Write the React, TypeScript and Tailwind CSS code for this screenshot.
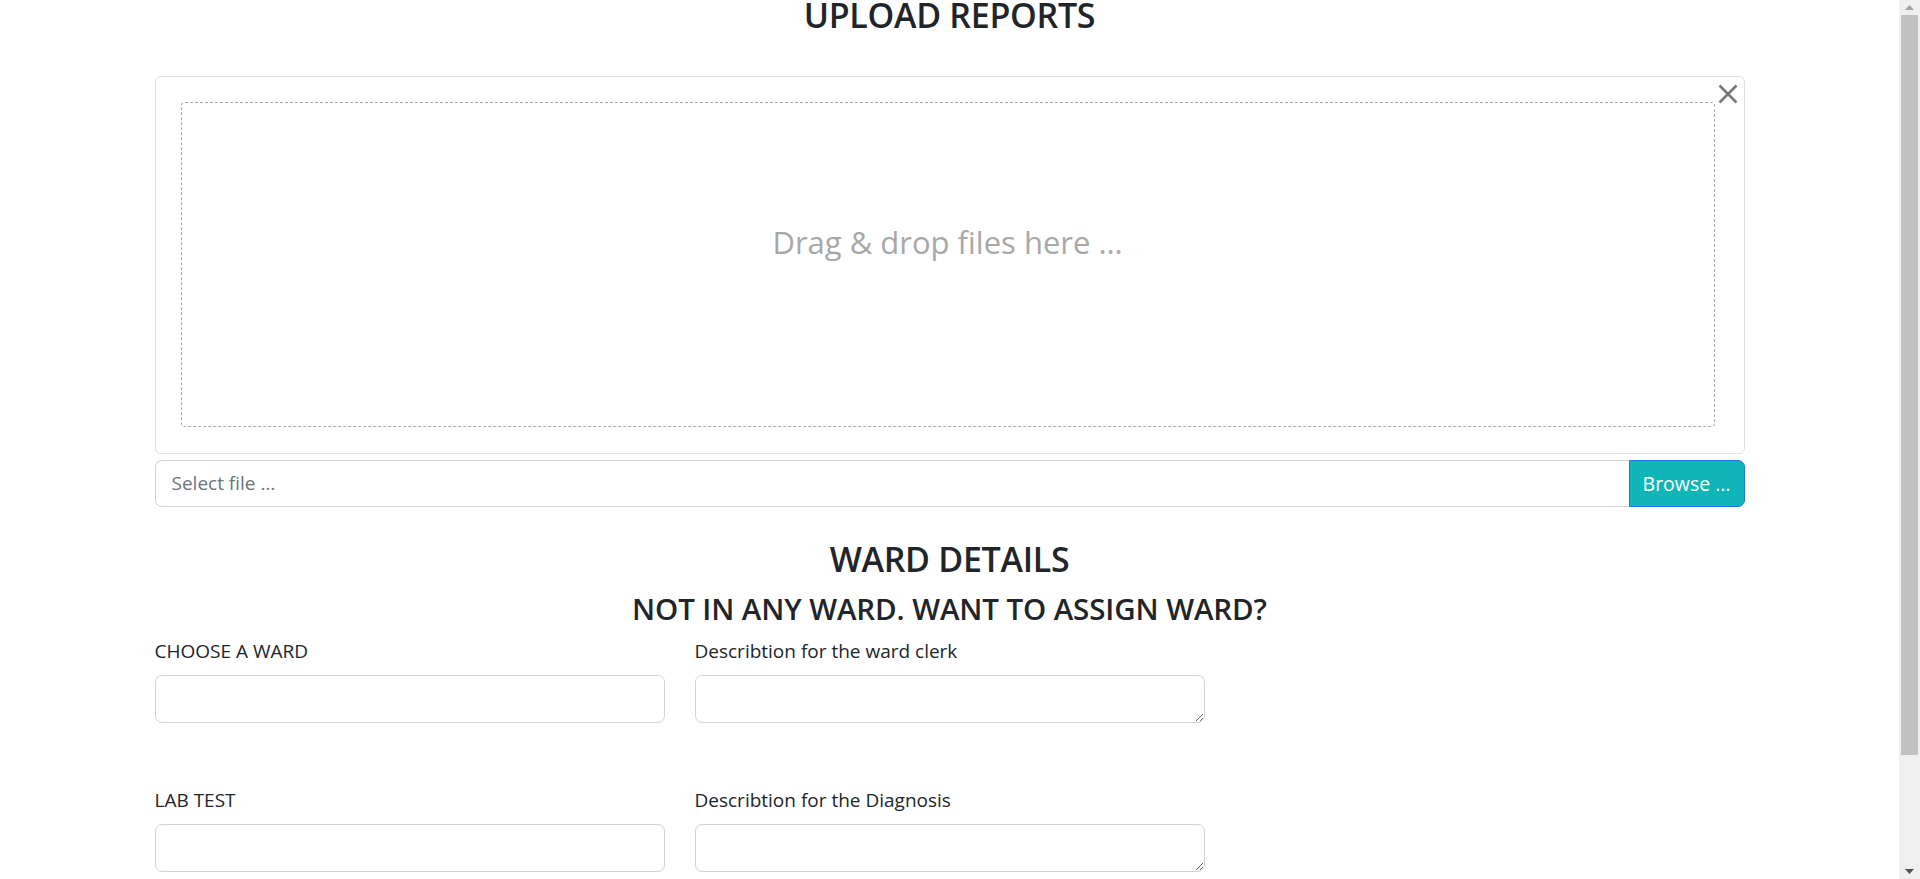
import React from "react";

const font = { fontFamily: '"Open Sans", "Noto Sans", "Liberation Sans", sans-serif' };

function Field({ label, textarea }: { label: string; textarea?: boolean }) {
  return (
    <div className="flex flex-col">
      <label className="text-[19px] leading-[30px] text-[#212529] mb-[9px]">{label}</label>
      {textarea ? (
        <textarea className="h-[48px] w-full rounded-[7px] border border-[#ced4da] bg-white px-[15px] py-[7px] text-[20px] outline-none" />
      ) : (
        <input className="h-[48px] w-full rounded-[7px] border border-[#ced4da] bg-white px-[15px] text-[20px] outline-none" />
      )}
    </div>
  );
}

export default function App() {
  return (
    <div className="flex h-[879px] w-[1920px] overflow-hidden bg-white text-[#212529]" style={font}>
      <div className="flex-1 min-w-0">
        <div className="mx-auto w-[1590px]">
          <h3 className="h-[30px] text-center text-[34px] font-semibold leading-[30px] tracking-[-0.3px]">UPLOAD REPORTS</h3>

          <div className="relative mt-[46px] rounded-[6px] border border-[#dee2e6] pl-[25px] pr-[29px] pt-[25px] pb-[26px]">
            <button className="absolute right-[6px] top-[7px] flex h-[20px] w-[20px] items-center justify-center text-[#777]">
              <svg width="20" height="20" viewBox="0 0 20 20" fill="none" stroke="currentColor" strokeWidth="2.5">
                <path d="M1.5 1.5 L18.5 18.5 M18.5 1.5 L1.5 18.5" />
              </svg>
            </button>
            <div className="h-[325px] rounded-[4px] border border-dashed border-[#aaa] pt-[121px] text-center">
              <div className="text-[31px] leading-[36px] text-[#a8a8a8]">Drag &amp; drop files here …</div>
            </div>
          </div>

          <div className="mt-[6px] flex h-[47px]">
            <div className="flex flex-1 items-center rounded-l-[7px] border border-r-0 border-[#ced4da] pl-[16px] text-[19px] text-[#6c757d]">
              Select file …
            </div>
            <button className="flex w-[116px] items-center justify-center rounded-r-[7px] border border-[#1a78e6] bg-[#10b5b7] text-[19.5px] text-white">
              Browse …
            </button>
          </div>

          <h3 className="mt-[31px] text-center text-[34px] font-semibold leading-[42px] tracking-[-0.3px]">WARD DETAILS</h3>
          <h4 className="mt-[11px] text-center text-[29.5px] font-semibold leading-[36px] tracking-[-0.1px]">NOT IN ANY WARD. WANT TO ASSIGN WARD?</h4>

          <div className="mt-[9px] grid grid-cols-3 gap-x-[30px] gap-y-[62px]">
            <Field label="CHOOSE A WARD" />
            <Field label="Describtion for the ward clerk" textarea />
            <div />
            <Field label="LAB TEST" />
            <Field label="Describtion for the Diagnosis" textarea />
            <div />
          </div>
        </div>
      </div>

      <div className="flex w-[21px] flex-col items-center bg-[#f0f0f0]">
        <div className="flex h-[15px] items-center justify-center">
          <svg width="9" height="5" viewBox="0 0 9 5"><path d="M0 5 L4.5 0 L9 5 Z" fill="#a3a3a3" /></svg>
        </div>
        <div className="h-[740px] w-[17px] bg-[#c1c1c1]" />
        <div className="flex-1" />
        <div className="flex h-[15px] items-center justify-center">
          <svg width="9" height="5" viewBox="0 0 9 5"><path d="M0 0 L4.5 5 L9 0 Z" fill="#505050" /></svg>
        </div>
      </div>
    </div>
  );
}
